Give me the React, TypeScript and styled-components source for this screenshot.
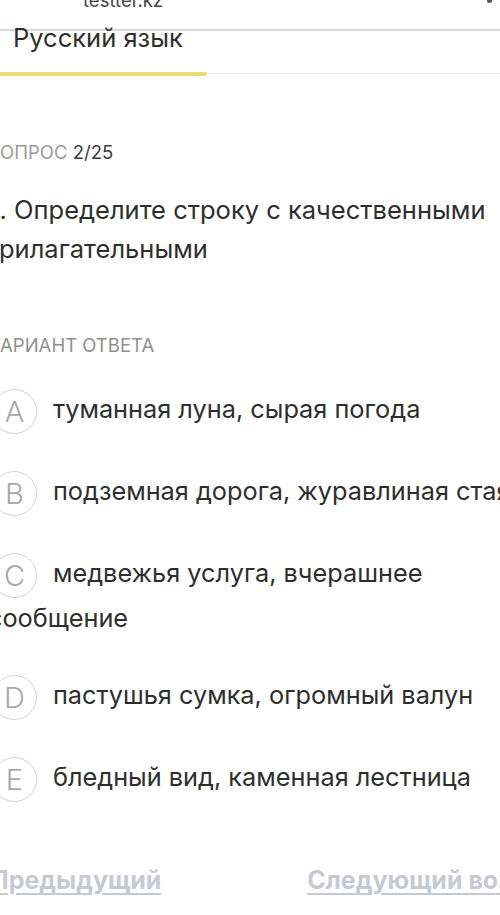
import React from 'react';
import styled, { createGlobalStyle } from 'styled-components';

const GlobalStyle = createGlobalStyle`
  html, body {
    margin: 0;
    padding: 0;
    background: #fff;
  }
  body {
    font-family: Inter, "Noto Sans", Roboto, sans-serif;
    color: #333;
    -webkit-font-smoothing: antialiased;
  }
`;

const options = [
  { letter: 'A', text: 'туманная луна, сырая погода' },
  { letter: 'B', text: 'подземная дорога, журавлиная стая' },
  { letter: 'C', text: 'медвежья услуга, вчерашнее сообщение' },
  { letter: 'D', text: 'пастушья сумка, огромный валун' },
  { letter: 'E', text: 'бледный вид, каменная лестница' },
];

const App = () => {
  return (
    <>
      <GlobalStyle />
      <Page>
        <TopBar>
          <Domain>testter.kz</Domain>
          <Menu />
        </TopBar>
        <Subject>Русский язык</Subject>
        <ProgressTrack>
          <ProgressFill style={{ width: `${(207 / 500) * 100}%` }} />
        </ProgressTrack>

        <Content>
          <Counter>
            ВОПРОС <strong>2/25</strong>
          </Counter>
          <Question>2. Определите строку с качественными прилагательными</Question>

          <AnswerLabel>ВАРИАНТ ОТВЕТА</AnswerLabel>
          <OptionList>
            {options.map((o) => (
              <Option key={o.letter}>
                <Letter>{o.letter}</Letter>
                {o.text}
              </Option>
            ))}
          </OptionList>
        </Content>

        <Nav>
          <NavLink>Предыдущий</NavLink>
          <NavLink>Следующий вопрос</NavLink>
        </Nav>
      </Page>
    </>
  );
};

const Page = styled.div`
  width: 500px;
  height: 915px;
  overflow: hidden;
  position: relative;
`;

const TopBar = styled.div`
  height: 29px;
  border-bottom: 2px solid #d9d9d9;
  display: flex;
  justify-content: space-between;
  align-items: flex-start;
  padding: 0 8px 0 83px;
`;

const Domain = styled.span`
  font-size: 18.5px;
  line-height: 20px;
  margin-top: -10px;
  color: #444;
`;

const Menu = styled.span`
  width: 5px;
  height: 3px;
  border-radius: 0 0 3px 3px;
  background: #555;
`;

const Subject = styled.h1`
  margin: 0;
  padding: 0 13px;
  height: 41px;
  font-size: 25.5px;
  font-weight: 400;
  line-height: 14px;
  color: #2e2e2e;
`;

const ProgressTrack = styled.div`
  height: 4px;
  background: linear-gradient(#fff 0 1.5px, #e4e4e4 1.5px 2.5px, #fff 2.5px);
`;

const ProgressFill = styled.div`
  height: 4px;
  border-radius: 0 2px 2px 0;
  background: #ebdd72;
`;

/* the page is wider than the window, its right side is cut off */
const Content = styled.div`
  width: 528px;
  margin-left: -12px;
  padding-top: 66px;
`;

const Counter = styled.div`
  font-size: 18.5px;
  line-height: 20px;
  color: #9a9a9a;

  strong {
    font-weight: 400;
    color: #3c3c3c;
  }
`;

const Question = styled.p`
  margin: 28px 0 0 -4px;
  width: 510px;
  font-size: 25.5px;
  line-height: 39px;
  color: #2e2e2e;
`;

const AnswerLabel = styled.div`
  margin-top: 67px;
  font-size: 18.5px;
  line-height: 20px;
  color: #8f8f8f;
`;

const OptionList = styled.div`
  margin-top: 34px;
  display: flex;
  flex-direction: column;
  gap: 37px;
`;

const Option = styled.div`
  font-size: 25.3px;
  line-height: 40px;
  color: #2e2e2e;
`;

const Letter = styled.span`
  display: inline-flex;
  align-items: center;
  justify-content: center;
  box-sizing: border-box;
  width: 45px;
  height: 45px;
  margin: 0 16px 0 4px;
  border: 1.5px solid #d4d4d4;
  border-radius: 50%;
  vertical-align: middle;
  font-size: 29px;
  font-weight: 300;
  line-height: 1;
  color: #a8a8a8;
`;

const Nav = styled.div`
  position: absolute;
  left: -10px;
  bottom: 20px;
  display: flex;
  gap: 146px;
  white-space: nowrap;
`;

const NavLink = styled.a`
  font-size: 25px;
  font-weight: 700;
  color: #c6c9d4;
  text-decoration: underline;
  text-underline-offset: 4px;
  text-decoration-thickness: 2px;
`;

export default App;
